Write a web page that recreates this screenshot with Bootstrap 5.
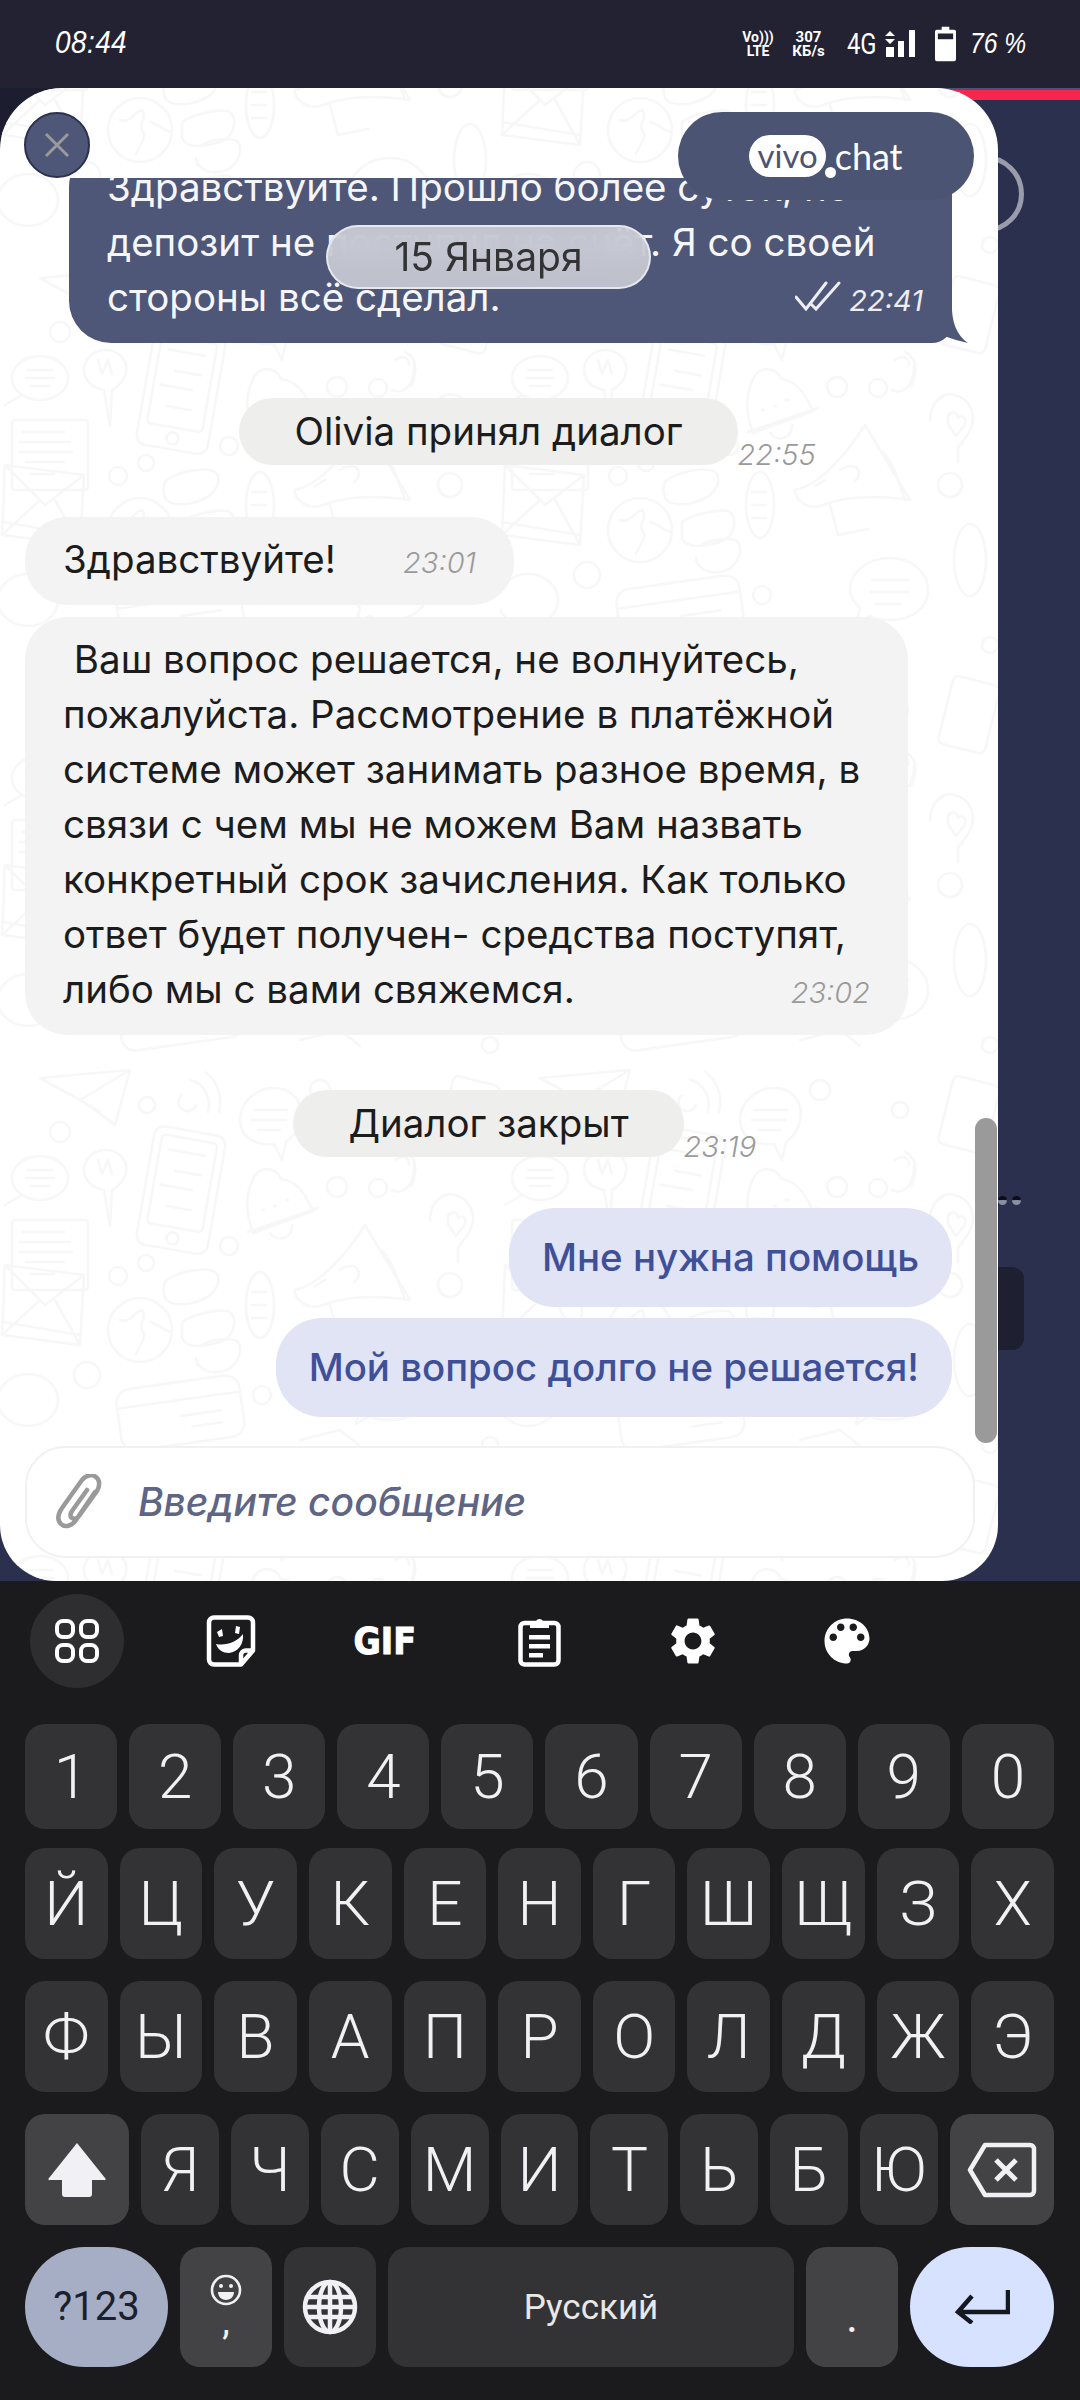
<!DOCTYPE html>
<html lang="ru">
<head>
<meta charset="utf-8">
<title>vivo.chat</title>
<link href="https://cdn.jsdelivr.net/npm/bootstrap@5.3.0/dist/css/bootstrap.min.css" rel="stylesheet">
<style>
html,body{margin:0;padding:0}
body{width:1080px;height:2400px;overflow:hidden;background:#1b1b1d;font-family:"Inter","Liberation Sans",sans-serif}
.sbar{height:88px;background:#222233;color:#fff;padding:0 55px;font-family:"Roboto",sans-serif}
.sb-time{font-size:31px;font-style:italic;font-family:"Liberation Sans",sans-serif;letter-spacing:.5px;margin-top:-2px;transform:scaleX(.9);transform-origin:left center}
.sb-right{gap:0}
.sb-tiny{font-size:15px;line-height:14px;font-weight:700;text-align:center;white-space:nowrap}
.sb-volte{width:26px;display:flex;flex-direction:column;align-items:center;font-size:14px}
.sb-speed{width:31px;margin-left:22px;display:flex;flex-direction:column;align-items:center}
.sb-4g{width:28px;margin-left:23px;font-size:29px;line-height:1;font-weight:400;transform:scaleX(.82);transform-origin:left center;white-space:nowrap}
.sb-signal{margin-left:10px}
.sb-batt{margin-left:18px}
.sb-pct{width:55px;margin-left:14px;font-size:29px;font-style:italic;font-family:"Liberation Sans",sans-serif;white-space:nowrap;transform:scaleX(.85);transform-origin:left center}
.stage{height:1493px;background:linear-gradient(#1c1e30,#1c1e30) 0 0/100px 100px no-repeat,#2a304e;position:relative;overflow:hidden}
.red-strip{position:absolute;top:0;left:900px;right:0;height:12px;background:#f5274f;border-top:2px solid #4c5473}
.ring{position:absolute;left:946px;top:67px;width:78px;height:78px;border:5px solid #9a9bab;border-radius:50%}
.behind-rect{position:absolute;left:940px;top:1179px;width:84px;height:83px;background:#1e1f30;border-radius:12px}
.behind-dot{position:absolute;top:1108px;width:9px;height:9px;border-radius:50%;background:#8a8fa3;border-top:4px solid #0c0d18}
.bd-1{left:998px}
.bd-2{left:1012px}
.panel{position:relative;width:998px;height:1493px;background:#fff;border-radius:62px 62px 56px 56px;overflow:hidden}
.doodle{position:absolute;left:0;top:0;width:100%;height:100%}
.p-head{height:90px;flex:none}
.chat{flex:1 1 auto;min-height:0;overflow:hidden;padding:0 46px 0 25px;position:relative}
.msg-text{font-size:38.5px;line-height:55px;color:#1c1c1c;white-space:nowrap}
.bub{padding:15px 38px 18px;background:#f3f3f3;border-radius:42px}
.bub-out{margin-top:-33px;background:#4e5777;position:relative;width:883px;margin-left:auto;border-radius:42px 42px 20px 42px}
.bub-out .msg-text{color:#f6f6f8}
.stamp-wrap{margin-right:-9px}
.tail{position:absolute;right:-18px;bottom:0;width:40px;height:40px}
.t-stamp{font-size:29px;font-style:italic;color:#9a9a9a;line-height:1;font-weight:300}
.t-light{color:#eceef4;font-weight:400}
.sysrow{display:grid;grid-template-columns:1fr auto 1fr}
.sys-1{margin-top:55px}
.sys-2{margin-top:55px}
.syspill{background:#eeeeed;border-radius:34px;font-size:38.5px;line-height:67px;padding:0 55px;color:#1c1c1c;white-space:nowrap}
.sys-t{align-self:end;line-height:1;margin-bottom:-4px}
.bub-short{width:489px;margin-top:52px}
.bub-long{width:883px;margin-top:12px}
.mine{margin-top:51px;gap:11px}
.me{background:#e0e4f5;color:#3f5098;font-size:38.4px;font-weight:500;line-height:99px;padding:0 33px;border-radius:46px;white-space:nowrap}
.inbar{flex:none;padding:0 23px 23px 25px}
.inbox{height:112px;border:2px solid #f1f1f1;border-radius:40px;background:#fff;padding-left:28px;gap:33px}
.ph{font-size:39px;font-style:italic;font-weight:500;color:#5f6585;white-space:nowrap}
.close-x{position:absolute;left:24px;top:24px;width:66px;height:66px;border-radius:50%;background:#4e5777;border:2px solid #2a3050}
.vivo{position:absolute;left:678px;top:24px;width:296px;height:88px;border-radius:44px;background:#4c5473;color:#fff;font-family:"Lato","Liberation Sans",sans-serif;font-size:36px}
.vivo-w{position:relative;background:#fff;color:#4c5473;border-radius:21px;height:42px;line-height:40px;padding:0 8px;margin-right:9px;font-size:33px}
.vivo-d{position:absolute;right:-10px;bottom:-1px;width:11px;height:11px;border-radius:50%;background:#fff}
.date{position:absolute;left:326px;top:137px;width:325px;height:64px;border-radius:32px;background:rgba(210,212,220,.85);backdrop-filter:blur(12px);border:2px solid rgba(235,236,242,.9);color:#333;font-size:39px}
.sbthumb{position:absolute;left:975px;top:1030px;width:22px;height:325px;border-radius:11px;background:#9a9a9a}
.kb{height:819px;background:#1b1b1d;padding:0 26px 0 25px}
.tools{height:143px;margin:0 -26px 0 -25px;padding-bottom:23px}
.tool{width:154px;height:120px;color:#fff}
.tool-on{width:94px;height:94px;border-radius:50%;background:#2e2e30}
.gif{font-family:"DejaVu Sans",sans-serif;font-weight:700;font-size:37px;transform:scaleX(.9);line-height:1;-webkit-text-stroke:1px #fff}
.krow{gap:12px}
.krow+.krow{margin-top:22px}
.k{flex:1 1 0;min-width:0;background:#333336;border-radius:20px;color:#f1f0f5;font-family:"Roboto",sans-serif;font-size:62px;font-weight:350;line-height:1}
.h-n{height:105px}
.r-top{margin-bottom:-3px}
.h-l{height:111px}
.h-b{height:120px}
.k-mod{background:#434346}
.k-shift,.k-back{flex:0 0 104px}
.k-sym{flex:0 0 143px;background:#a5aec4;color:#1b2030;border-radius:60px;font-size:40px;font-weight:400}
.k-comma,.k-glob,.k-dot{flex:0 0 92px}
.k-space{flex:1 1 0;font-size:35px;color:#e8e8e8;font-weight:400}
.k-enter{flex:0 0 144px;background:#d6e2ff;border-radius:60px}
.comma-ch{font-size:38px;line-height:1;margin-top:-4px;font-weight:400}
.dot-ch{font-size:46px;margin-top:18px;font-weight:400}
</style>
</head>
<body>
<div class="sbar d-flex align-items-center">
  <div class="sb-time">08:44</div>
  <div class="ms-auto d-flex align-items-center sb-right">
    <div class="sb-tiny sb-volte"><span>Vo)))</span><span>LTE</span></div>
    <div class="sb-tiny sb-speed"><span>307</span><span>КБ/s</span></div>
    <div class="sb-4g">4G</div>
    <svg class="sb-signal" width="32" height="30" viewBox="0 0 32 30" fill="#fff"><path d="M5 2l5 5H0zM5 15l5-5H0z"/><rect x="1" y="18" width="8" height="10"/><rect x="13" y="12" width="6" height="16"/><rect x="24" y="1" width="6" height="27"/></svg>
    <svg class="sb-batt" width="21" height="36" viewBox="0 0 22 36"><path fill="#fff" d="M7 0h8v3h5a2 2 0 0 1 2 2v29a2 2 0 0 1-2 2H2a2 2 0 0 1-2-2V5a2 2 0 0 1 2-2h5z"/><rect x="3" y="7" width="16" height="6" fill="#222233"/></svg>
    <div class="sb-pct">76 %</div>
  </div>
</div>

<div class="stage">
  <div class="red-strip"></div>
  <div class="ring"></div>
  <div class="behind-dot bd-1"></div>
  <div class="behind-dot bd-2"></div>
  <div class="behind-rect"></div>

  <div class="panel d-flex flex-column">
    <svg class="doodle" xmlns="http://www.w3.org/2000/svg" aria-hidden="true">
      <defs>
        <pattern id="dd" width="500" height="400" patternUnits="userSpaceOnUse" patternTransform="translate(0 172)">
          <g fill="none" stroke="#f7f7f8" stroke-width="2.6" stroke-linejoin="round" stroke-linecap="round">
            <path d="M40 18L130 10 115 65 95 50 80 40zM130 10L80 40 100 52"/>
            <circle cx="147" cy="45" r="8"/><circle cx="60" cy="72" r="10"/>
            <path d="M182 35a9 9 0 1 0 14 10M190 20c12 2 22 16 18 32M205 12c12 8 18 24 14 40"/>
            <path d="M240 60c0-18 16-32 34-32s30 14 26 32c-2 14-14 22-14 22l-4 18-8-16c-20 2-34-8-34-24zM255 50h32M252 60h34M258 70h22"/>
            <ellipse cx="40" cy="118" rx="28" ry="22"/><path d="M28 110h24M26 118h28M30 126h20M22 135L5 145"/>
            <path d="M84 110c0-12 10-20 22-20s22 10 20 22-14 18-14 18l-2 36-6-36c-12-2-20-10-20-20z"/><path d="M98 100l4 14 6-14 4 14"/>
            <g transform="rotate(10 180 130)"><rect x="145" y="70" width="72" height="120" rx="10"/><rect x="153" y="78" width="56" height="90" rx="4"/><circle cx="181" cy="179" r="6"/><path d="M162 92h36M172 112h26M160 128h32M170 148h24"/></g>
            <path d="M255 115c10-10 22-6 26 4 16 2 24 14 32 32l-60 22c-8-22-8-40 2-58zM248 172l70-24M270 173a12 12 0 0 0 22-8"/><path d="M262 150h2M274 146h2M286 140h2"/>
            <circle cx="337" cy="127" r="10"/><circle cx="378" cy="128" r="9"/>
            <path d="M395 100c8-6 14-2 14 4M405 92c10 4 14 18 6 34M392 130c8 4 22 0 22-24" />
            <path d="M430 160c0-18 14-30 28-24 14 6 20 22 10 38l-10 14v14M448 156c4-6 10-4 10 2 4-4 10 0 6 8l-8 10-8-12z"/>
            <path d="M295 230c20-4 45-26 70-65l45 75c-40-6-70-2-90 6-14 4-26-8-25-16zM380 190c10 4 18 30 25 50M340 210a10 7 -30 0 1 14 12M315 226l10-6M330 245l8 30 30-6"/>
            <rect x="12" y="160" width="76" height="70" rx="3"/><path d="M22 172h42M20 182h50M20 192h52M26 202h38M30 214h24"/>
            <path d="M5 205L84 215 80 285 2 275zM5 205L45 245 84 215M2 275L40 240M80 285L55 240M2 262L80 275"/>
            <circle cx="118" cy="216" r="9"/><circle cx="146" cy="203" r="8"/><circle cx="229" cy="186" r="9"/>
            <circle cx="140" cy="270" r="32"/><path d="M120 260c10 4 14-8 22-10 6 8-4 14 0 20 6 6-2 14-6 24M150 262c8 2 14 8 20 10"/>
            <path d="M165 222c10-10 40-16 50-10 8 6 2 22-14 28-14 6-32 6-36-2-2-6-2-12 0-16z"/>
            <path d="M182 262c10-8 40-14 48-10 8 8 4 26-10 30-20 6-34 6-38-4zM200 286c8-6 32-10 38-4 6 10-2 28-18 30-14 2-24-6-24-14"/>
            <ellipse cx="260" cy="245" rx="14" ry="33"/><path d="M252 232h14M252 245h14M252 258h14"/>
            <circle cx="87" cy="315" r="13"/><ellipse cx="28" cy="340" rx="30" ry="26"/><circle cx="262" cy="335" r="9"/>
            <g transform="rotate(-8 180 350)"><rect x="118" y="322" width="124" height="62" rx="14"/><path d="M118 340h124M180 356h40M190 368h30"/></g>
            <circle cx="450" cy="225" r="12"/><ellipse cx="470" cy="300" rx="16" ry="36"/>
            <path d="M350 330c0-18 18-32 40-32s38 14 38 32-16 30-38 30c-8 0-14 0-20-4l-14 8 4-16c-6-6-10-12-10-18zM372 320h36M370 332h38M376 344h24"/>
            <rect x="445" y="20" width="48" height="70" rx="6" transform="rotate(14 470 55)"/><circle cx="320" cy="30" r="10"/><circle cx="400" cy="50" r="8"/>
            <path d="M300 380l40-10 20 16"/><circle cx="490" cy="385" r="8"/>
          </g>
        </pattern>
      </defs>
      <rect width="100%" height="100%" fill="url(#dd)"/>
    </svg>

    <div class="p-head position-relative"></div>

    <div class="chat d-flex flex-column">
      <div class="bub bub-out flex-shrink-0">
        <div class="msg-text">Здравствуйте. Прошло более суток, но<br>депозит не поступил на счёт. Я со своей</div>
        <div class="msg-text d-flex justify-content-between align-items-baseline">
          <span>стороны всё сделал.</span>
          <span class="d-inline-flex align-items-baseline gap-2 stamp-wrap">
            <svg width="46" height="30" viewBox="0 0 46 30" fill="none" stroke="#eceef4" stroke-width="3" stroke-linecap="round"><path d="M1 16l10 12L31 2M16 23l5 5L44 2"/></svg>
            <span class="t-stamp t-light">22:41</span>
          </span>
        </div>
        <svg class="tail" viewBox="0 0 40 40" aria-hidden="true"><path fill="#4e5777" d="M0 0H22C21 18 27 33 38 40 30 38 22 36 14 33 10 36 5 38 0 40Z"/></svg>
      </div>

      <div class="sysrow sys-1 flex-shrink-0">
        <div></div>
        <div class="syspill">Olivia принял диалог</div>
        <div class="t-stamp sys-t">22:55</div>
      </div>

      <div class="bub bub-short flex-shrink-0">
        <div class="msg-text d-flex align-items-baseline justify-content-between">
          <span>Здравствуйте!</span><span class="t-stamp">23:01</span>
        </div>
      </div>

      <div class="bub bub-long flex-shrink-0">
        <div class="msg-text">&nbsp;Ваш вопрос решается, не волнуйтесь,<br>пожалуйста. Рассмотрение в платёжной<br>системе может занимать разное время, в<br>связи с чем мы не можем Вам назвать<br>конкретный срок зачисления. Как только<br>ответ будет получен- средства поступят,</div>
        <div class="msg-text d-flex align-items-baseline justify-content-between">
          <span>либо мы с вами свяжемся.</span><span class="t-stamp">23:02</span>
        </div>
      </div>

      <div class="sysrow sys-2 flex-shrink-0">
        <div></div>
        <div class="syspill">Диалог закрыт</div>
        <div class="t-stamp sys-t">23:19</div>
      </div>

      <div class="mine d-flex flex-column align-items-end flex-shrink-0">
        <div class="me">Мне нужна помощь</div>
        <div class="me">Мой вопрос долго не решается!</div>
      </div>
    </div>

    <div class="inbar position-relative">
      <div class="inbox d-flex align-items-center">
        <svg width="50" height="56" viewBox="0 0 50 56" fill="none" stroke="#9a9a9a" stroke-width="4.5" stroke-linecap="round" stroke-linejoin="round"><path d="M40 18L21 46c-4 6-11 8-15 4s-3-10 1-16L27 6c4-5 10-6 14-3s4 9 1 14L24 42c-2 3-5 3-7 2s-2-4 0-7l15-21"/></svg>
        <div class="ph">Введите сообщение</div>
      </div>
    </div>

    <div class="sbthumb"></div>
    <div class="close-x d-flex align-items-center justify-content-center">
      <svg width="26" height="26" viewBox="0 0 26 26" stroke="#9a9a9a" stroke-width="3" fill="none"><path d="M2 2l22 22M24 2L2 24"/></svg>
    </div>
    <div class="vivo d-flex align-items-center justify-content-center">
      <span class="vivo-w">vivo<span class="vivo-d"></span></span><span>chat</span>
    </div>
    <div class="date d-flex align-items-center justify-content-center">15 Января</div>
  </div>
</div>

<div class="kb">
  <div class="tools d-flex align-items-center">
    <div class="tool d-flex align-items-center justify-content-center">
      <div class="tool-on d-flex align-items-center justify-content-center">
        <svg width="44" height="44" viewBox="0 0 44 44" fill="none" stroke="#fff" stroke-width="4"><rect x="2" y="2" width="16" height="16" rx="6"/><rect x="26" y="2" width="16" height="16" rx="6"/><rect x="2" y="26" width="16" height="16" rx="6"/><rect x="26" y="26" width="16" height="16" rx="6"/></svg>
      </div>
    </div>
    <div class="tool d-flex align-items-center justify-content-center">
      <svg width="50" height="52" viewBox="0 0 50 52"><path fill="none" stroke="#fff" stroke-width="4.5" stroke-linejoin="round" d="M8 2.5h34a5 5 0 0 1 5 5v28L35 49.5H8a5 5 0 0 1-5-5v-37a5 5 0 0 1 5-5zM47 35.5H40a5 5 0 0 0-5 5v9"/><path fill="#fff" d="M11 17l5-3 1 7-4 1zM30 11l4 1-1 7-4-1zM10 29c10 2 21-2 27-10 1 10-5 18-14 19-6 0-11-3-13-9z"/></svg>
    </div>
    <div class="tool d-flex align-items-center justify-content-center"><span class="gif">GIF</span></div>
    <div class="tool d-flex align-items-center justify-content-center">
      <svg width="43" height="52" viewBox="0 0 43 52"><rect x="2.5" y="8" width="38" height="41.5" rx="4" fill="none" stroke="#fff" stroke-width="4.5"/><path fill="#fff" d="M12 6h6a4 4 0 0 1 7 0h6v7H12z"/><rect x="11" y="20" width="21" height="4.5" fill="#fff"/><rect x="11" y="29" width="21" height="4.5" fill="#fff"/><rect x="11" y="38" width="14" height="4.5" fill="#fff"/></svg>
    </div>
    <div class="tool d-flex align-items-center justify-content-center">
      <svg width="56" height="56" viewBox="0 0 24 24" fill="#fff"><path d="M19.14 12.94c.04-.3.06-.61.06-.94 0-.32-.02-.64-.07-.94l2.03-1.58c.18-.14.23-.41.12-.61l-1.92-3.32c-.12-.22-.37-.29-.59-.22l-2.39.96c-.5-.38-1.03-.7-1.62-.94l-.36-2.54c-.04-.24-.24-.41-.48-.41h-3.84c-.24 0-.43.17-.47.41l-.36 2.54c-.59.24-1.13.57-1.62.94l-2.39-.96c-.22-.08-.47 0-.59.22L2.74 8.87c-.12.21-.08.47.12.61l2.03 1.58c-.05.3-.09.63-.09.94s.02.64.07.94l-2.03 1.58c-.18.14-.23.41-.12.61l1.92 3.32c.12.22.37.29.59.22l2.39-.96c.5.38 1.03.7 1.62.94l.36 2.54c.05.24.24.41.48.41h3.84c.24 0 .44-.17.47-.41l.36-2.54c.59-.24 1.13-.56 1.62-.94l2.39.96c.22.08.47 0 .59-.22l1.92-3.32c.12-.22.07-.47-.12-.61l-2.01-1.58zM12 15.6c-1.98 0-3.6-1.62-3.6-3.6s1.62-3.6 3.6-3.6 3.6 1.62 3.6 3.6-1.62 3.6-3.6 3.6z"/></svg>
    </div>
    <div class="tool d-flex align-items-center justify-content-center">
      <svg width="60" height="60" viewBox="0 0 24 24" fill="#fff"><path d="M12 3c-4.97 0-9 4.03-9 9s4.03 9 9 9c.83 0 1.5-.67 1.5-1.5 0-.39-.15-.74-.39-1.01-.23-.26-.38-.61-.38-.99 0-.83.67-1.5 1.5-1.5H16c2.76 0 5-2.24 5-5 0-4.42-4.03-8-9-8zm-5.5 9c-.83 0-1.5-.67-1.5-1.5S5.67 9 6.5 9 8 9.67 8 10.5 7.33 12 6.5 12zm3-4C8.67 8 8 7.33 8 6.5S8.67 5 9.5 5s1.5.67 1.5 1.5S10.33 8 9.5 8zm5 0c-.83 0-1.5-.67-1.5-1.5S13.67 5 14.5 5s1.5.67 1.5 1.5S15.33 8 14.5 8zm3 4c-.83 0-1.5-.67-1.5-1.5S16.67 9 17.5 9s1.5.67 1.5 1.5-.67 1.5-1.5 1.5z"/></svg>
    </div>
  </div>

  <div class="krow d-flex r-top">
    <div class="k h-n d-flex align-items-center justify-content-center">1</div><div class="k h-n d-flex align-items-center justify-content-center">2</div><div class="k h-n d-flex align-items-center justify-content-center">3</div><div class="k h-n d-flex align-items-center justify-content-center">4</div><div class="k h-n d-flex align-items-center justify-content-center">5</div><div class="k h-n d-flex align-items-center justify-content-center">6</div><div class="k h-n d-flex align-items-center justify-content-center">7</div><div class="k h-n d-flex align-items-center justify-content-center">8</div><div class="k h-n d-flex align-items-center justify-content-center">9</div><div class="k h-n d-flex align-items-center justify-content-center">0</div>
  </div>
  <div class="krow d-flex">
    <div class="k h-l d-flex align-items-center justify-content-center">Й</div><div class="k h-l d-flex align-items-center justify-content-center">Ц</div><div class="k h-l d-flex align-items-center justify-content-center">У</div><div class="k h-l d-flex align-items-center justify-content-center">К</div><div class="k h-l d-flex align-items-center justify-content-center">Е</div><div class="k h-l d-flex align-items-center justify-content-center">Н</div><div class="k h-l d-flex align-items-center justify-content-center">Г</div><div class="k h-l d-flex align-items-center justify-content-center">Ш</div><div class="k h-l d-flex align-items-center justify-content-center">Щ</div><div class="k h-l d-flex align-items-center justify-content-center">З</div><div class="k h-l d-flex align-items-center justify-content-center">Х</div>
  </div>
  <div class="krow d-flex">
    <div class="k h-l d-flex align-items-center justify-content-center">Ф</div><div class="k h-l d-flex align-items-center justify-content-center">Ы</div><div class="k h-l d-flex align-items-center justify-content-center">В</div><div class="k h-l d-flex align-items-center justify-content-center">А</div><div class="k h-l d-flex align-items-center justify-content-center">П</div><div class="k h-l d-flex align-items-center justify-content-center">Р</div><div class="k h-l d-flex align-items-center justify-content-center">О</div><div class="k h-l d-flex align-items-center justify-content-center">Л</div><div class="k h-l d-flex align-items-center justify-content-center">Д</div><div class="k h-l d-flex align-items-center justify-content-center">Ж</div><div class="k h-l d-flex align-items-center justify-content-center">Э</div>
  </div>
  <div class="krow d-flex">
    <div class="k k-mod k-shift h-l d-flex align-items-center justify-content-center">
      <svg width="58" height="54" viewBox="0 0 58 54" fill="#f1f0f5"><path d="M29 0L57 35a1 1 0 0 1-1 2H44v14a3 3 0 0 1-3 3H17a3 3 0 0 1-3-3V37H2a1 1 0 0 1-1-2z"/></svg>
    </div>
    <div class="k h-l d-flex align-items-center justify-content-center">Я</div><div class="k h-l d-flex align-items-center justify-content-center">Ч</div><div class="k h-l d-flex align-items-center justify-content-center">С</div><div class="k h-l d-flex align-items-center justify-content-center">М</div><div class="k h-l d-flex align-items-center justify-content-center">И</div><div class="k h-l d-flex align-items-center justify-content-center">Т</div><div class="k h-l d-flex align-items-center justify-content-center">Ь</div><div class="k h-l d-flex align-items-center justify-content-center">Б</div><div class="k h-l d-flex align-items-center justify-content-center">Ю</div>
    <div class="k k-mod k-back h-l d-flex align-items-center justify-content-center">
      <svg width="70" height="56" viewBox="0 0 70 56" fill="none" stroke="#f1f0f5" stroke-width="4.5" stroke-linejoin="round"><path d="M18 3H63a4 4 0 0 1 4 4V49a4 4 0 0 1-4 4H18L3 28z"/><path d="M29 18L49 38M49 18L29 38" stroke-width="5"/></svg>
    </div>
  </div>
  <div class="krow d-flex">
    <div class="k k-sym h-b d-flex align-items-center justify-content-center">?123</div>
    <div class="k k-mod k-comma h-b d-flex flex-column align-items-center justify-content-center">
      <svg width="32" height="32" viewBox="0 0 32 32" fill="none" stroke="#f1f0f5" stroke-width="2.6"><circle cx="16" cy="16" r="14"/><circle cx="11" cy="12" r="2" fill="#f1f0f5" stroke="none"/><circle cx="21" cy="12" r="2" fill="#f1f0f5" stroke="none"/><path d="M8 18h16c0 5-4 8-8 8s-8-3-8-8z" fill="#f1f0f5" stroke="none"/></svg>
      <span class="comma-ch">,</span>
    </div>
    <div class="k k-glob h-b d-flex align-items-center justify-content-center">
      <svg width="56" height="56" viewBox="0 0 56 56" fill="none" stroke="#f1f0f5" stroke-width="4.5"><circle cx="28" cy="28" r="25"/><ellipse cx="28" cy="28" rx="11" ry="25"/><path d="M28 3v50M6 18h44M6 38h44M3 28h50"/></svg>
    </div>
    <div class="k k-space h-b d-flex align-items-center justify-content-center">Русский</div>
    <div class="k k-mod k-dot h-b d-flex align-items-center justify-content-center"><span class="dot-ch">.</span></div>
    <div class="k k-enter h-b d-flex align-items-center justify-content-center">
      <svg width="56" height="34" viewBox="0 0 56 34" fill="none" stroke="#16181f" stroke-width="4.5"><path d="M54 0V22H5M18 6L4 22l14 11" /></svg>
    </div>
  </div>
</div>
<script src="https://cdn.jsdelivr.net/npm/bootstrap@5.3.0/dist/js/bootstrap.bundle.min.js"></script>
</body>
</html>
